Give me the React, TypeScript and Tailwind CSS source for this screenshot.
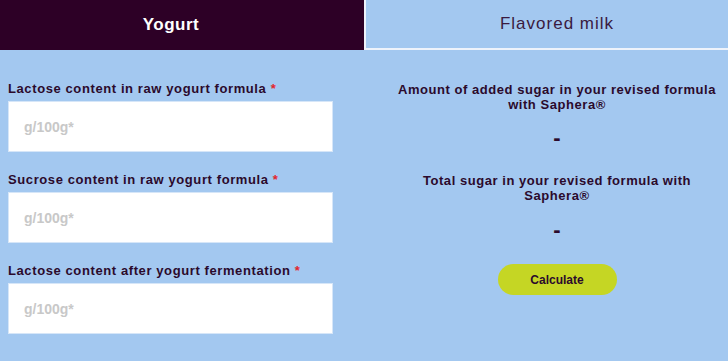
const fields = [
  'Lactose content in raw yogurt formula',
  'Sucrose content in raw yogurt formula',
  'Lactose content after yogurt fermentation',
];

function App() {
  return (
    <div className="w-[728px] h-[361px] overflow-hidden bg-[#a3c8f0] font-['Liberation_Sans',Arial,sans-serif] text-[#2b0a2c]">
      {/* Tabs */}
      <div className="flex h-[50px]">
        <div className="w-[364px] bg-[#2d0026] flex items-center justify-center pr-[22px] text-white text-[17px] font-bold tracking-[0.5px]">
          Yogurt
        </div>
        <div className="flex-1 border-l-2 border-b-2 border-[#eef3fb] flex items-center justify-center pl-[20px] text-[17px] tracking-[1px] text-[#3a1a3f]">
          Flavored milk
        </div>
      </div>

      <div className="flex">
        {/* Inputs */}
        <div className="w-[364px] pl-2 pt-[32px] flex flex-col gap-[21px]">
          {fields.map((f) => (
            <div key={f} className="flex flex-col gap-[5px]">
              <label className="text-[13px] leading-[14px] font-bold tracking-[0.6px]">
                {f} <span className="text-[#e3262d]">*</span>
              </label>
              <input
                placeholder="g/100g*"
                className="w-[325px] h-[51px] bg-white border border-[#d6e6f8] px-[15px] text-[14px] font-bold outline-none placeholder:text-[#c8c8c8]"
              />
            </div>
          ))}
        </div>

        {/* Results */}
        <div className="flex-1 pl-[22px] pt-[32px] flex flex-col items-center text-center">
          <p className="text-[13px] leading-[15px] font-bold tracking-[0.55px] w-[340px]">
            Amount of added sugar in your revised formula with Saphera®
          </p>
          <p className="mt-[14px] text-[22px] leading-[24px] font-bold">-</p>
          <p className="mt-[23px] text-[13px] leading-[15px] font-bold tracking-[0.55px] w-[300px]">
            Total sugar in your revised formula with Saphera®
          </p>
          <p className="mt-[15px] text-[22px] leading-[24px] font-bold">-</p>
          <button className="mt-[22px] w-[119px] h-[31px] rounded-full bg-[#c5d624] text-[12px] font-bold text-[#2b0a2c]">
            Calculate
          </button>
        </div>
      </div>
    </div>
  );
}

export default App;
